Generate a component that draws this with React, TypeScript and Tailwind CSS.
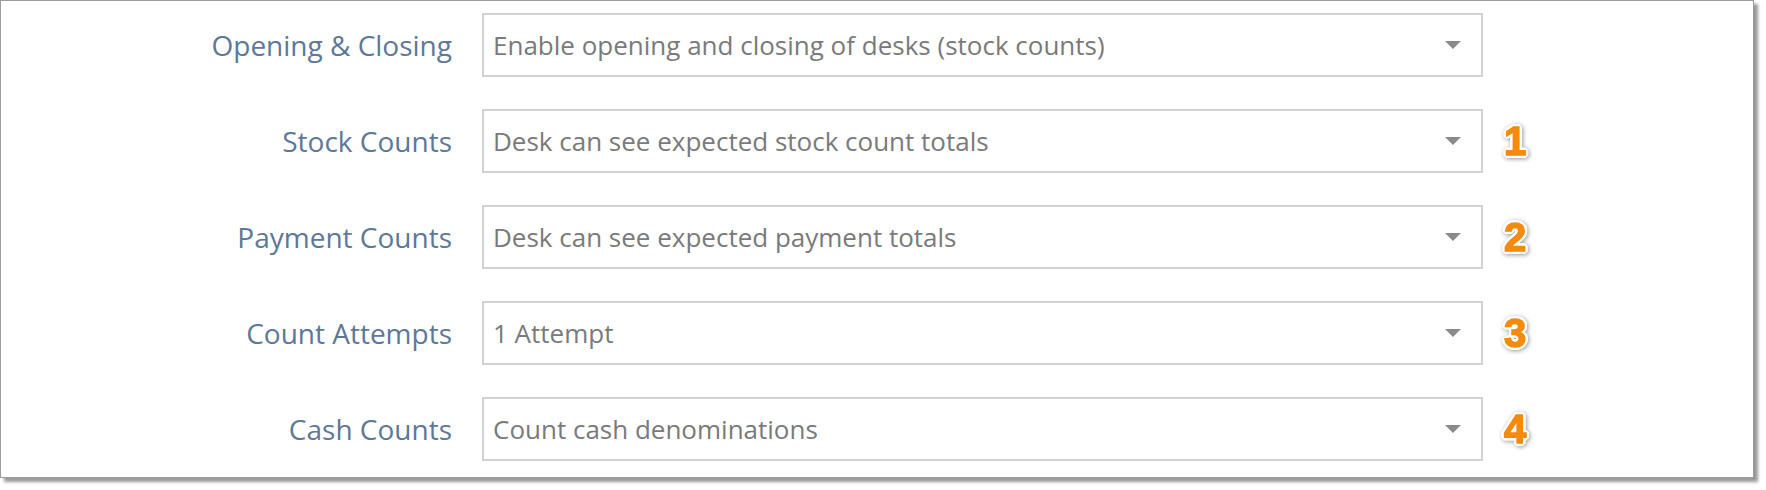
import React from 'react'

const rows = [
  { label: 'Opening & Closing', value: 'Enable opening and closing of desks (stock counts)', badge: '' },
  { label: 'Stock Counts', value: 'Desk can see expected stock count totals', badge: '1' },
  { label: 'Payment Counts', value: 'Desk can see expected payment totals', badge: '2' },
  { label: 'Count Attempts', value: '1 Attempt', badge: '3' },
  { label: 'Cash Counts', value: 'Count cash denominations', badge: '4' },
]

function Caret() {
  return (
    <svg width="16" height="8" viewBox="0 0 16 8" className="shrink-0">
      <path d="M0 0 L16 0 L8 8 Z" fill="#8a8a8a" />
    </svg>
  )
}

// orange step number with a white outline and soft shadow
function Badge({ n }: { n: string }) {
  if (!n) return null
  return (
    <span
      className={
        'w-[36px] text-center text-[40px] leading-none font-bold text-[#f68a0c] ' +
        "font-['Liberation_Sans',Arial,sans-serif] " +
        '[-webkit-text-stroke:1.5px_#f68a0c] ' +
        '[text-shadow:3px_0_0_#fff,-3px_0_0_#fff,0_3px_0_#fff,0_-3px_0_#fff,2px_2px_0_#fff,-2px_2px_0_#fff,2px_-2px_0_#fff,-2px_-2px_0_#fff,3px_1px_0_#fff,-3px_1px_0_#fff,3px_-1px_0_#fff,-3px_-1px_0_#fff,1px_3px_0_#fff,-1px_3px_0_#fff,1px_-3px_0_#fff,-1px_-3px_0_#fff] ' +
        '[filter:drop-shadow(1px_1px_2px_rgba(0,0,0,0.4))]'
      }
    >
      {n}
    </span>
  )
}

export default function App() {
  return (
    <div className="w-[1766px] h-[490px] bg-white font-['Open_Sans',sans-serif]">
      <div className="w-[1754px] h-[478px] border border-[#9c9c9c] bg-white pt-[12px] flex flex-col gap-[32px] [box-shadow:4px_4px_3px_rgba(0,0,0,0.4)]">
        {rows.map((row) => (
          <div key={row.label} className="flex items-center h-[64px]">
            <div className="w-[451px] text-right text-[28px] text-[#5d7898]">{row.label}</div>
            <div className="ml-[30px] w-[1001px] h-[64px] border-2 border-[#d2d2d2] flex items-center justify-between pl-[9px] pr-[20px]">
              <span className="text-[26px] text-[#7a7a7a]">{row.value}</span>
              <Caret />
            </div>
            <div className="ml-[14px] flex items-center">
              <Badge n={row.badge} />
            </div>
          </div>
        ))}
      </div>
    </div>
  )
}
